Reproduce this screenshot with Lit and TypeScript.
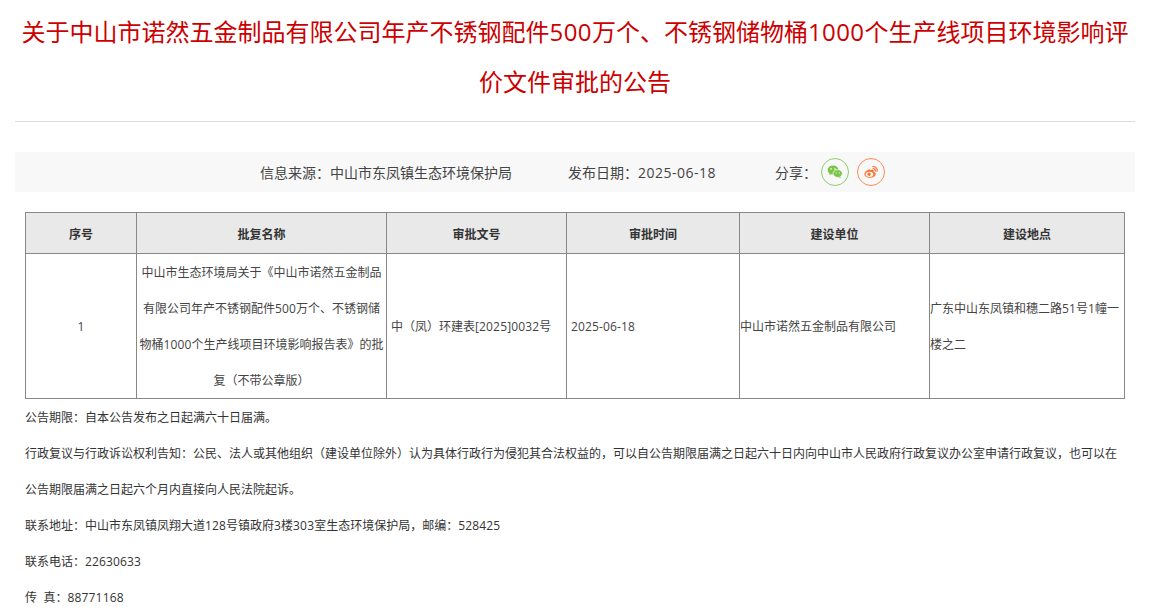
import { LitElement, html, css } from "lit";
import { customElement } from "lit/decorators.js";

const rows = ["序号", "批复名称", "审批文号", "审批时间", "建设单位", "建设地点"];

/* Latin and digit runs take a wider face than the CJK one, so they are wrapped apart from the CJK text. */
const t = (s: string) =>
  s.split(/([\x20-\x7e\u00a0]+)/).map((part, i) => (i % 2 ? html`<span class="n">${part}</span>` : part));

@customElement("app-root")
export class AppRoot extends LitElement {
  static styles = css`
    :host { display: block; height: 613px; overflow: hidden; background: #fff; font-family: "Noto Sans CJK SC", "Liberation Sans", sans-serif; color: #333; }
    .page { width: 1120px; margin: 0 0 0 15px; }
    .n { font-family: "Open Sans", sans-serif; line-height: 1; letter-spacing: .15px; }
    h1 { margin: 0; padding: 6px 0 15px; font-size: 24px; line-height: 50px; font-weight: 400; color: #c00; text-align: center; border-bottom: 1px solid #ddd; }
    h1 .n { letter-spacing: .4px; }
    .info { margin-top: 30px; height: 40px; box-sizing: border-box; padding: 0 0 1px 245px; background: #f8f8f8; display: flex; align-items: center; font-size: 14px; color: #444; }
    .info .n { letter-spacing: .5px; }
    .src { width: 308px; }
    .date { width: 207px; }
    .share { display: flex; align-items: center; gap: 8px; }
    .share span { margin-right: -4px; }
    .ic { width: 28px; height: 28px; border-radius: 50%; box-sizing: border-box; display: flex; align-items: center; justify-content: center; }
    .wx { border: 1px solid #8fcf68; }
    .wb { border: 1px solid #ff8a57; }
    .body { padding: 20px 10px 0; font-size: 12px; }
    table { border-collapse: collapse; table-layout: fixed; width: 1100px; }
    th, td { border: 1px solid #888; padding: 0; font-size: 12px; }
    th { height: 40px; background: #e9e9e9; font-weight: 700; text-align: center; color: #333; }
    td { line-height: 36px; color: #444; }
    .c { text-align: center; }
    .name { padding: 0 1px; }
    .l { padding-left: 4px; }
    p { margin: 0; line-height: 36px; color: #333; }
  `;

  render() {
    return html`<div class="page">
      <h1>${t("关于中山市诺然五金制品有限公司年产不锈钢配件500万个、不锈钢储物桶1000个生产线项目环境影响评价文件审批的公告")}</h1>
      <div class="info">
        <div class="src">信息来源：中山市东凤镇生态环境保护局</div>
        <div class="date">${t("发布日期：2025-06-18")}</div>
        <div class="share">
          <span>分享：</span>
          <div class="ic wx"><svg width="16" height="14" viewBox="0 0 20 18"><ellipse cx="7.5" cy="6.5" rx="7" ry="5.8" fill="#7bc549"/><path d="M3.5 10l-1 3 3.5-1.800z" fill="#7bc549"/><ellipse cx="13.500" cy="11" rx="6" ry="5" fill="#7bc549" stroke="#f8f8f8" stroke-width="1"/><path d="M16.500 14.500l1 2.500-3-1.500z" fill="#7bc549"/><circle cx="5" cy="5" r="1" fill="#f8f8f8"/><circle cx="10" cy="5" r="1" fill="#f8f8f8"/><circle cx="11.500" cy="10" r=".8" fill="#f8f8f8"/><circle cx="15.500" cy="10" r=".8" fill="#f8f8f8"/></svg></div>
          <div class="ic wb"><svg width="16" height="14" viewBox="0 0 20 18"><path d="M8.500 5.500C5 6 1.500 9 1.500 12c0 2.800 3.500 4.500 6.800 4.500 4.200 0 7.700-2.300 7.700-5 0-1.700-1.700-2.500-2.700-2.800.5-1.200.4-2.300-.8-2.700-1.200-.4-2.700.2-3.500.6.300-1-.3-1.400-1.500-1.100z" fill="#ff763b"/><ellipse cx="8" cy="12" rx="4.800" ry="3.400" fill="#f8f8f8"/><circle cx="7.500" cy="12" r="2.200" fill="#ff763b"/><path d="M12.500 1.800a5.500 5.500 0 0 1 5.500 6.200M12.800 4.500a2.800 2.800 0 0 1 2.800 3.300" fill="none" stroke="#ff763b" stroke-width="1.600" stroke-linecap="round"/></svg></div>
        </div>
      </div>
      <div class="body">
        <table>
          <colgroup><col style="width:111px"/><col style="width:250px"/><col style="width:180px"/><col style="width:173px"/><col style="width:190px"/><col style="width:195px"/></colgroup>
          <tr>${rows.map((r) => html`<th>${r}</th>`)}</tr>
          <tr>
            <td class="c">${t("1")}</td>
            <td class="c name">${t("中山市生态环境局关于《中山市诺然五金制品有限公司年产不锈钢配件500万个、不锈钢储物桶1000个生产线项目环境影响报告表》的批复（不带公章版）")}</td>
            <td class="l">${t("中（凤）环建表[2025]0032号")}</td>
            <td class="l">${t("2025-06-18")}</td>
            <td>中山市诺然五金制品有限公司</td>
            <td>${t("广东中山东凤镇和穗二路51号1幢一楼之二")}</td>
          </tr>
        </table>
        <p>公告期限：自本公告发布之日起满六十日届满。</p>
        <p>行政复议与行政诉讼权利告知：公民、法人或其他组织（建设单位除外）认为具体行政行为侵犯其合法权益的，可以自公告期限届满之日起六十日内向中山市人民政府行政复议办公室申请行政复议，也可以在公告期限届满之日起六个月内直接向人民法院起诉。</p>
        <p>${t("联系地址：中山市东凤镇凤翔大道128号镇政府3楼303室生态环境保护局，邮编：528425")}</p>
        <p>${t("联系电话：22630633")}</p>
        <p>${t("传\u00a0\u00a0真：88771168")}</p>
      </div>
    </div>`;
  }
}
